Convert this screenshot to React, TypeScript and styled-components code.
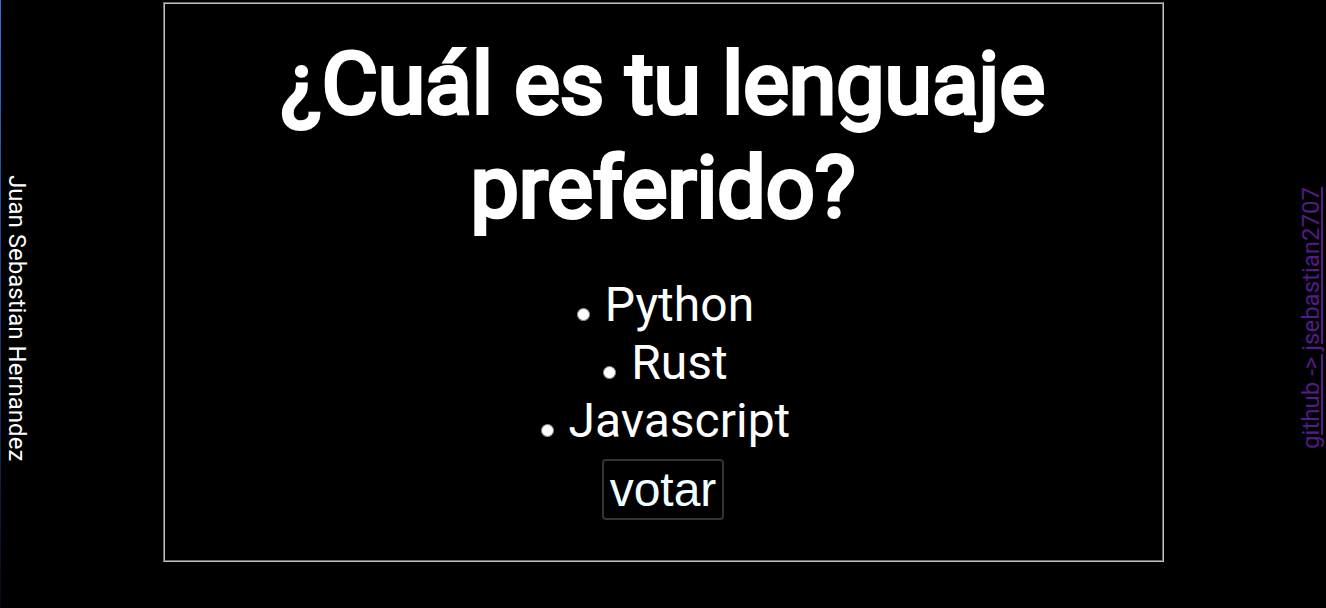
import React from "react";
import styled, { createGlobalStyle } from "styled-components";

const GlobalStyle = createGlobalStyle`
  body {
    margin: 0;
    background: #000;
    color: #fff;
    font-family: Roboto, sans-serif;
  }
`;

const Page = styled.div`
  display: grid;
  grid-template-columns: 1fr minmax(0, 1001px) 1fr;
  min-height: 100vh;
`;

const Side = styled.aside<{ $end?: boolean }>`
  display: flex;
  align-items: center;
  justify-content: ${(p) => (p.$end ? "flex-end" : "flex-start")};
  box-sizing: border-box;
  padding: ${(p) => (p.$end ? "28px 1px 0 0" : "28px 0 0 3px")};
  font-size: 24px;
  line-height: 28px;
  background: ${(p) =>
    p.$end ? "none" : "linear-gradient(#3b6be0, #050a18) left / 1px 100% no-repeat"};
`;

const Author = styled.p`
  margin: 0;
  writing-mode: vertical-rl;
`;

const ProfileLink = styled.a`
  color: #551a8b;
  writing-mode: sideways-lr;
`;

const Poll = styled.form`
  align-self: start;
  display: flex;
  flex-direction: column;
  align-items: center;
  box-sizing: border-box;
  margin-top: 2px;
  padding: 28px 20px 40px;
  border: 2px groove #c0c0c0;
  font-size: 48px;
`;

const Question = styled.h1`
  margin: 0 0 36px;
  font-size: 86px;
  line-height: 104px;
  font-weight: 400;
  -webkit-text-stroke: 4px #fff;
  text-align: center;
`;

const Option = styled.div`
  line-height: 58px;
`;

const Radio = styled.input`
  margin: 3px 3px 0 5px;
`;

const VoteButton = styled.button`
  margin-top: 9px;
  padding: 1px 6px;
  border: 2px solid #333;
  border-radius: 4px;
  background: #000;
  color: azure;
  font-family: "Liberation Sans", Arial, sans-serif;
  font-size: 48px;
`;

const options = ["Python", "Rust", "Javascript"];

export default function App() {
  return (
    <>
      <GlobalStyle />
      <Page>
        <Side>
          <Author>Juan Sebastian Hernandez</Author>
        </Side>
        <Poll onSubmit={(e) => e.preventDefault()}>
          <Question>¿Cuál es tu lenguaje preferido?</Question>
          {options.map((name) => (
            <Option key={name}>
              <Radio type="radio" name="language" id={name} value={name} />{" "}
              <label htmlFor={name}>{name}</label>
            </Option>
          ))}
          <VoteButton type="submit">votar</VoteButton>
        </Poll>
        <Side $end>
          <ProfileLink href="https://github.com/jsebastian2707">
            github -&gt; jsebastian2707
          </ProfileLink>
        </Side>
      </Page>
    </>
  );
}
